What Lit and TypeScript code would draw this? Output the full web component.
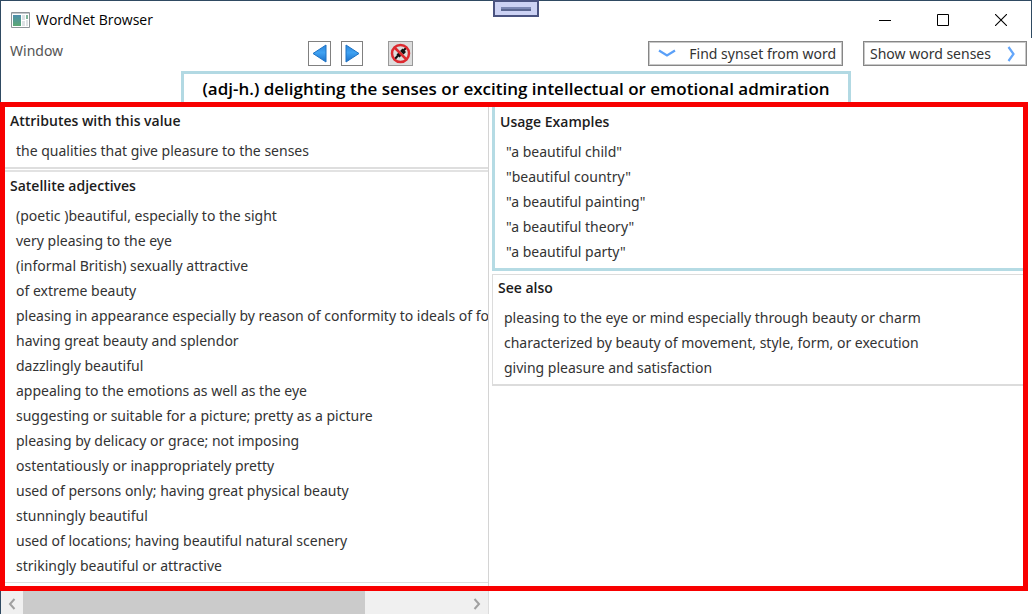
import { LitElement, html, css, svg } from "lit";
import { customElement, property } from "lit/decorators.js";

const attributes = ["the qualities that give pleasure to the senses"];

const satellites = [
  "(poetic )beautiful, especially to the sight",
  "very pleasing to the eye",
  "(informal British) sexually attractive",
  "of extreme beauty",
  "pleasing in appearance especially by reason of conformity to ideals of form",
  "having great beauty and splendor",
  "dazzlingly beautiful",
  "appealing to the emotions as well as the eye",
  "suggesting or suitable for a picture; pretty as a picture",
  "pleasing by delicacy or grace; not imposing",
  "ostentatiously or inappropriately pretty",
  "used of persons only; having great physical beauty",
  "stunningly beautiful",
  "used of locations; having beautiful natural scenery",
  "strikingly beautiful or attractive",
];

const usages = [
  '"a beautiful child"',
  '"beautiful country"',
  '"a beautiful painting"',
  '"a beautiful theory"',
  '"a beautiful party"',
];

const seeAlso = [
  "pleasing to the eye or mind especially through beauty or charm",
  "characterized by beauty of movement, style, form, or execution",
  "giving pleasure and satisfaction",
];

@customElement("synset-group")
export class SynsetGroup extends LitElement {
  @property() heading = "";
  @property({ attribute: false }) items: string[] = [];

  static styles = css`
    :host {
      display: block;
      box-sizing: border-box;
      overflow: hidden;
      padding: 1px 4px 4px 5px;
    }
    h2 {
      margin: 0 0 5px;
      font-size: 14px;
      font-weight: 600;
      line-height: 25px;
      color: #1c1c1c;
    }
    ul {
      margin: 0;
      padding: 0 0 0 6px;
      list-style: none;
      font-family: "Noto Sans", "Open Sans", sans-serif;
    }
    li {
      line-height: 25px;
      white-space: nowrap;
    }
  `;

  render() {
    return html`
      <h2>${this.heading}</h2>
      <ul>
        ${this.items.map((item) => html`<li>${item}</li>`)}
      </ul>
    `;
  }
}

@customElement("app-root")
export class AppRoot extends LitElement {
  static styles = css`
    :host {
      display: flex;
      flex-direction: column;
      box-sizing: border-box;
      height: 100vh;
      overflow: hidden;
      background: #fff;
      color: #333;
      font: 14px/20px "Open Sans", "Noto Sans", sans-serif;
    }
    button {
      font: inherit;
      color: inherit;
      padding: 0;
      margin: 0;
      background: none;
      border: 0;
    }
    svg {
      display: block;
    }

    .titlebar {
      position: relative;
      display: flex;
      align-items: center;
      height: 37px;
      padding: 0 1px 0 10px;
      border: solid #2f4a62;
      border-width: 1px 1px 0 1px;
      color: #000;
    }
    .titlebar h1 {
      flex: 1;
      margin: 0 0 0 6px;
      font-size: 14px;
      font-weight: 400;
    }
    .caption {
      display: grid;
      place-items: center;
      width: 58px;
      height: 37px;
    }
    .grip {
      position: absolute;
      top: -1px;
      left: 50%;
      transform: translateX(-50%);
      box-sizing: border-box;
      width: 46px;
      height: 17px;
      padding: 5px 6px;
      background: #ccd2f4;
      border: 2px solid #4a5380;
    }
    .grip span {
      display: block;
      height: 4px;
      background: #7c88b4;
      border-bottom: 2px solid #5a6690;
      box-sizing: border-box;
    }

    .toolbar {
      box-sizing: border-box;
      display: grid;
      grid-template-columns: 307fr 105px 614fr;
      align-items: center;
      height: 33px;
      padding: 0 5px 2px 0;
      border-left: 1px solid #2f4a62;
    }
    .menu {
      justify-self: start;
      margin: 0 0 6px 9px;
      color: #555;
      font-family: "Noto Sans", "Open Sans", sans-serif;
    }
    .nav {
      display: flex;
    }
    .tool {
      box-sizing: border-box;
      display: grid;
      place-items: center;
      width: 23px;
      height: 25px;
      margin-right: 10px;
      background: #fff;
      border: 1px solid #808080;
    }
    .tool.off {
      width: 25px;
      margin: 0 0 0 15px;
      background: #ddd;
      border-color: #999;
    }
    .actions {
      display: flex;
      justify-content: flex-end;
      gap: 20px;
    }
    .action {
      box-sizing: border-box;
      display: flex;
      align-items: center;
      justify-content: space-between;
      height: 25px;
      padding: 0 6px 0 6px;
      border: 1px solid #868686;
      outline: 1px solid #c8c8c8;
      outline-offset: -2px;
      white-space: nowrap;
      font-family: "Noto Sans", "Open Sans", sans-serif;
    }
    .find {
      width: 195px;
      padding-left: 9px;
    }
    .show {
      width: 164px;
      padding-right: 10px;
    }

    .headline {
      display: flex;
      justify-content: center;
      height: 31px;
      padding-right: 1px;
      border-left: 1px solid #2f4a62;
    }
    .headline h2 {
      box-sizing: border-box;
      width: 670px;
      margin: 0;
      border: solid #b2d9e3;
      border-width: 3px 3px 0;
      color: #000;
      font-size: 17px;
      font-weight: 600;
      line-height: 30px;
      text-align: center;
      white-space: nowrap;
    }

    .results {
      flex: 1;
      display: grid;
      grid-template-columns: minmax(0, 484fr) minmax(0, 534fr);
      min-height: 0;
      margin-right: 4px;
      border: 5px solid #f80000;
    }
    .column {
      min-width: 0;
      overflow: hidden;
    }
    .column.left {
      border-right: 1px solid #d4d4d4;
    }
    .column.right {
      padding-left: 3px;
    }
    .left synset-group {
      border-bottom: 2px solid #dedede;
    }
    .left synset-group + synset-group {
      margin-top: 1px;
      border-top: 2px solid #e2e2e2;
      border-bottom-width: 1px;
    }
    .usage {
      border: solid #b5dbe4;
      border-width: 0 0 3px 3px;
      padding-top: 2px;
    }
    .see {
      margin-top: 3px;
      border: solid #dcdcdc;
      border-width: 1px 0 2px 1px;
      padding-top: 0;
    }

    .footer {
      display: grid;
      grid-template-columns: minmax(0, 488fr) minmax(0, 543fr);
      height: 23px;
      border-left: 1px solid #2f4a62;
    }
    .scroll {
      display: grid;
      grid-template-columns: 22px minmax(0, 342fr) minmax(0, 101fr) 22px;
      background: #f0f0f0;
      border-right: 1px solid #ddd;
    }
    .scroll button {
      display: grid;
      place-items: center;
      padding-top: 3px;
    }
    .thumb {
      background: #cbcbcb;
    }
  `;

  private arrow(id: string, path: string) {
    return svg`<svg width="17" height="21" viewBox="0 0 17 21">
      <defs><linearGradient id=${id} x1="0" y1="0" x2="0" y2="1">
        <stop offset="0" stop-color="#2c86dc"/><stop offset=".45" stop-color="#3fa2f2"/>
        <stop offset="1" stop-color="#1a6fc9"/></linearGradient></defs>
      <path d=${path} fill="url(#${id})" stroke="#1f73c4" stroke-width="1" stroke-linejoin="round"/>
    </svg>`;
  }

  render() {
    return html`
      <header class="titlebar">
        <svg width="19" height="16" viewBox="0 0 19 16">
          <defs><linearGradient id="app" x1="0" y1="0" x2="0" y2="1">
            <stop offset="0" stop-color="#4d8eac"/><stop offset="1" stop-color="#5ba873"/>
          </linearGradient></defs>
          <path d="M.5 .5h18v15H.5z" fill="#fff" stroke="#8e9499"/>
          <path d="M1 1h17v1H1z" fill="#c3c8cc"/>
          <path d="M2 3h8v11H2z" fill="url(#app)"/>
          <path d="M11 3h3v5h-3zM11 9h3v5h-3zM15 8h2v6h-2z" fill="#dde2e5"/>
          <path d="M15 3h2v4h-2z" fill="#7fb59a"/>
        </svg>
        <h1>WordNet Browser</h1>
        <button class="caption" aria-label="Minimize">
          <svg width="12" height="12"><path d="M0 6.5h12" stroke="#000" /></svg>
        </button>
        <button class="caption" aria-label="Maximize">
          <svg width="12" height="12"><path d="M.5 .5h11v11H.5z" fill="none" stroke="#000" /></svg>
        </button>
        <button class="caption" aria-label="Close">
          <svg width="12" height="12"><path d="M0 0l12 12M12 0L0 12" stroke="#000" stroke-width="1.1" /></svg>
        </button>
        <div class="grip"><span></span></div>
      </header>

      <div class="toolbar">
        <button class="menu">Window</button>
        <div class="nav">
          <button class="tool" aria-label="Back">${this.arrow("back", "M15 2v17L2 10.5z")}</button>
          <button class="tool" aria-label="Forward">${this.arrow("fwd", "M2 2v17L15 10.5z")}</button>
          <button class="tool off" aria-label="Disconnect">
            <svg width="21" height="21" viewBox="0 0 21 21">
              <path d="M4 17L8 12.5M13 8L17 4" stroke="#111" stroke-width="2" />
              <path d="M6.5 11.5l3-3 3 3-3 3zM10 8l2.500-2.500 3.500 3.500-2.500 2.500z" fill="#111" />
              <circle cx="10.500" cy="10.500" r="8.500" fill="none" stroke="#dc2a30" stroke-width="2.500" />
              <path d="M4.500 4.500l12 12" stroke="#dc2a30" stroke-width="2.500" />
            </svg>
          </button>
        </div>
        <div class="actions">
          <button class="action find">
            <svg width="18" height="9"><path d="M1 1.500l8 5 8-5" fill="none" stroke="#5aa0f8" stroke-width="2.200" /></svg>
            Find synset from word
          </button>
          <button class="action show">
            Show word senses
            <svg width="9" height="16"><path d="M1.500 1l5 7-5 7" fill="none" stroke="#64a6fa" stroke-width="2.200" /></svg>
          </button>
        </div>
      </div>

      <div class="headline">
        <h2>(adj-h.) delighting the senses or exciting intellectual or emotional admiration</h2>
      </div>

      <main class="results">
        <div class="column left">
          <synset-group heading="Attributes with this value" .items=${attributes}></synset-group>
          <synset-group heading="Satellite adjectives" .items=${satellites}></synset-group>
        </div>
        <div class="column right">
          <synset-group class="usage" heading="Usage Examples" .items=${usages}></synset-group>
          <synset-group class="see" heading="See also" .items=${seeAlso}></synset-group>
        </div>
      </main>

      <div class="footer">
        <div class="scroll">
          <button aria-label="Scroll left">
            <svg width="8" height="12"><path d="M6.500 1L2 6l4.500 5" fill="none" stroke="#a0a0a0" stroke-width="2" /></svg>
          </button>
          <div class="thumb"></div>
          <div></div>
          <button aria-label="Scroll right">
            <svg width="8" height="12"><path d="M1.500 1L6 6l-4.500 5" fill="none" stroke="#a0a0a0" stroke-width="2" /></svg>
          </button>
        </div>
      </div>
    `;
  }
}
